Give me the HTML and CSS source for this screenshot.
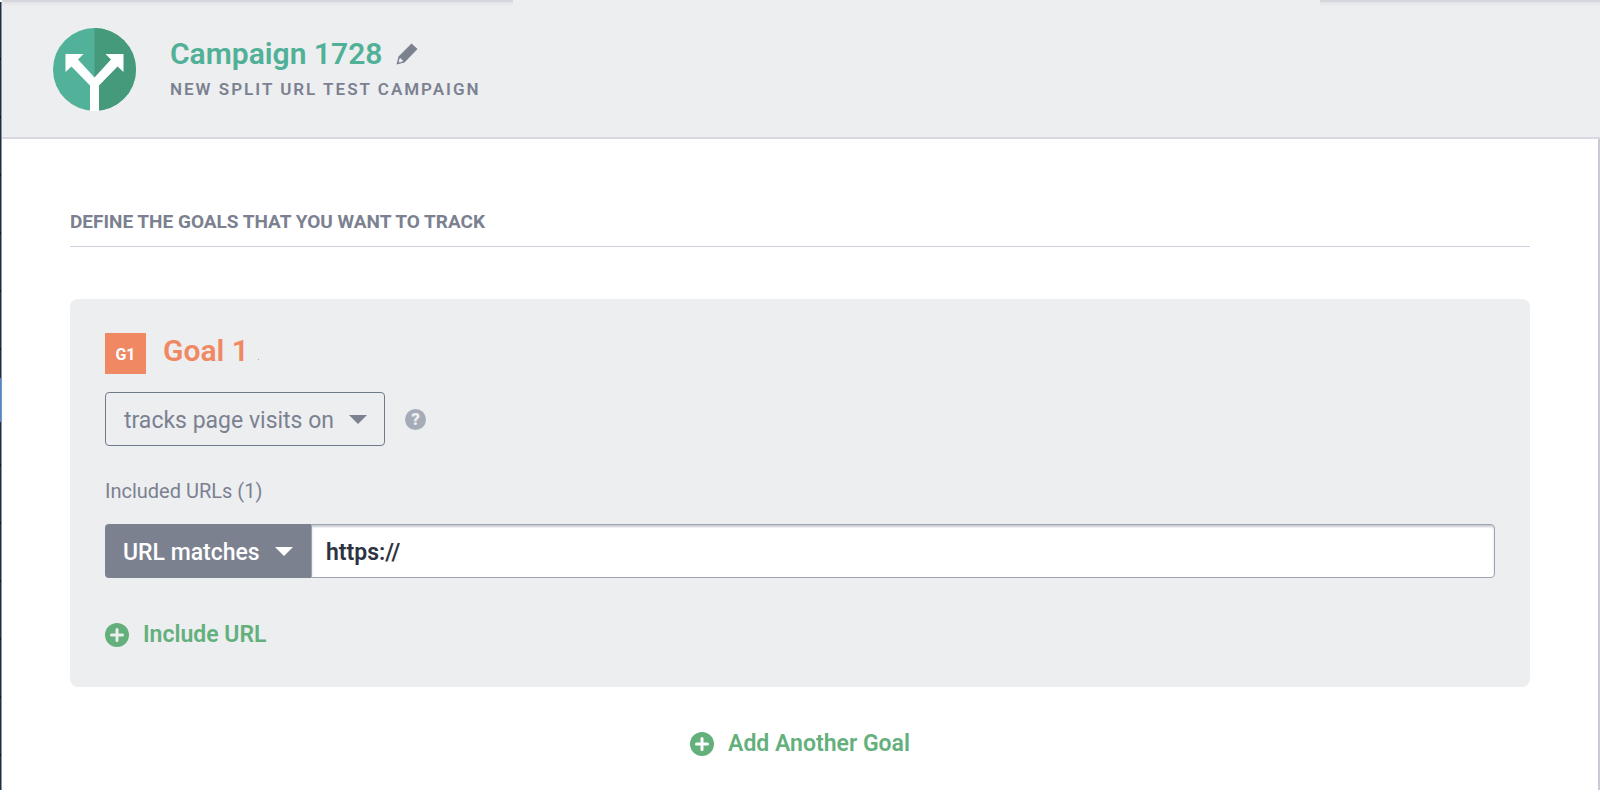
FILE: index.html
```html
<!DOCTYPE html>
<html lang="en">
    <head>
        <meta charset="UTF-8" />
        <meta name="viewport" content="width=device-width, initial-scale=1.0" />
        <title>Campaign 1728</title>
        <link rel="stylesheet" href="styles.css">
    </head>
    <body>
        <nav class="side-rail" aria-label="Main">
            <span class="side-rail-active"></span>
        </nav>
        <div class="page">
            <header class="campaign-header">
                <svg class="campaign-logo" viewBox="0 0 83 83" aria-hidden="true">
                    <circle cx="41.5" cy="41.5" r="41.5" fill="#52b199" />
                    <path d="M41.5 0a41.5 41.5 0 0 1 0 83z" fill="#449a7b" />
                    <path
                        d="M37 83V57.5L18.5 38.5L12.5 44V26H30.5L25 31.5L41.5 49.5L58 31.5L52.5 26H70.5V44L64.5 38.5L46 57.5V83z"
                        fill="#fff"
                    />
                </svg>
                <div class="campaign-info">
                    <div class="campaign-name">
                        <h1>Campaign 1728</h1>
                        <button class="icon-button" aria-label="Rename campaign">
                            <svg class="pencil" viewBox="0 0 22 22">
                                <path
                                    d="M15.5 0.5L21.5 6L8.5 19.5L0.5 21.5L2.5 13.5z"
                                    fill="#7b818f"
                                />
                                <path d="M3.6 15.5L5.2 15.3L5.6 16.8L7 17.2L6.6 18.6L3.6 19.6L2.6 18.6z" fill="#edeef0" />
                            </svg>
                        </button>
                    </div>
                    <p class="campaign-type">New split URL test campaign</p>
                </div>
            </header>

            <main class="content">
                <h2 class="section-title">Define the goals that you want to track</h2>

                <section class="goal-panel">
                    <div class="goal-header">
                        <span class="goal-badge">G1</span>
                        <h3>Goal 1</h3>
                        <span class="goal-edit-mark"></span>
                    </div>

                    <div class="goal-type">
                        <div class="dropdown dropdown-outline">
                            <select aria-label="Goal type">
                                <option>tracks page visits on</option>
                            </select>
                            <svg class="caret" viewBox="0 0 18 9">
                                <path d="M0 0H18L9 9z" fill="currentColor" />
                            </svg>
                        </div>
                        <button class="help" aria-label="Help">?</button>
                    </div>

                    <label class="url-label" for="url">Included URLs (1)</label>
                    <div class="url-row">
                        <div class="dropdown dropdown-solid">
                            <select aria-label="Match type">
                                <option>URL matches</option>
                            </select>
                            <svg class="caret" viewBox="0 0 18 9">
                                <path d="M0 0H18L9 9z" fill="currentColor" />
                            </svg>
                        </div>
                        <input type="text" id="url" class="url-input" value="https://" />
                    </div>

                    <button class="add-button">
                        <svg class="plus" viewBox="0 0 24 24">
                            <circle cx="12" cy="12" r="12" fill="#63b07c" />
                            <path d="M12 6.5V17.5M6.5 12H17.5" stroke="#edeef0" stroke-width="3" stroke-linecap="round" />
                        </svg>
                        Include URL
                    </button>
                </section>

                <div class="add-goal">
                    <button class="add-button">
                        <svg class="plus" viewBox="0 0 24 24">
                            <circle cx="12" cy="12" r="12" fill="#63b07c" />
                            <path d="M12 6.5V17.5M6.5 12H17.5" stroke="#fff" stroke-width="3" stroke-linecap="round" />
                        </svg>
                        Add Another Goal
                    </button>
                </div>
            </main>
        </div>
    </body>
</html>
```
FILE: styles.css
```css
* {
    margin: 0;
    padding: 0;
    box-sizing: border-box;
}

body {
    display: flex;
    min-height: 100vh;
    font-family: Roboto, "Liberation Sans", sans-serif;
    color: #7b8190;
    background-color: white;
}

button,
input,
select {
    font: inherit;
    color: inherit;
    border: 0;
    outline: none;
    background: none;
}

button,
select {
    cursor: pointer;
}

.side-rail {
    width: 2px;
    flex-shrink: 0;
    margin-top: 2px;
    padding-top: 376px;
    background: repeating-linear-gradient(#1d2f44 0, #1d2f44 56px, #0c141f 56px, #0c141f 58px);
    border-right: 1px solid #8d949d;
}

.side-rail-active {
    display: block;
    height: 44px;
    background-color: #3a8bf0;
}

.page {
    flex: 1;
    display: flex;
    flex-direction: column;
}

.campaign-header {
    position: relative;
    display: flex;
    align-items: flex-start;
    gap: 34px;
    padding: 28px 51px 26px;
    background-color: #edeef0;
    border-bottom: 2px solid #d8d8e2;
}

/* shadow of the bar above, open in the middle */
.campaign-header::before,
.campaign-header::after {
    content: "";
    position: absolute;
    top: 0;
    height: 6px;
    background: linear-gradient(#d6d6df 2px, #e2e2e7 2px, #edeef0);
}

.campaign-header::before {
    left: 0;
    width: 32%;
}

.campaign-header::after {
    right: 0;
    width: 280px;
}

.campaign-logo {
    width: 83px;
    height: 83px;
}

.campaign-info {
    padding-top: 8px;
}

.campaign-name {
    display: flex;
    align-items: center;
    gap: 14px;
}

.campaign-name h1 {
    font-size: 30px;
    line-height: 36px;
    font-weight: 600;
    color: #50b197;
}

.icon-button {
    display: flex;
}

.pencil {
    width: 22px;
    height: 22px;
}

.campaign-type {
    margin-top: 7px;
    font-size: 17px;
    line-height: 20px;
    font-weight: 600;
    letter-spacing: 2px;
    text-transform: uppercase;
}

.content {
    flex: 1;
    padding: 71px 68px 24px;
    border-right: 2px solid #c9ccd4;
}

.section-title {
    padding-bottom: 12px;
    font-size: 19px;
    line-height: 24px;
    font-weight: 700;
    text-transform: uppercase;
    border-bottom: 1px solid #d0d0de;
}

.goal-panel {
    margin-top: 52px;
    padding: 34px 35px 38px;
    background-color: #edeef0;
    border-radius: 8px;
}

.goal-header {
    display: flex;
    gap: 17px;
}

.goal-badge {
    width: 41px;
    line-height: 43px;
    height: 41px;
    text-align: center;
    font-size: 16px;
    font-weight: 700;
    color: white;
    background-color: #ef8863;
}

.goal-header h3 {
    font-size: 30px;
    line-height: 36px;
    font-weight: 600;
    color: #ef8863;
}

.goal-edit-mark {
    width: 1px;
    height: 1px;
    margin-top: 26px;
    margin-left: -8px;
    background-color: #a5abb6;
}

.goal-type {
    display: flex;
    align-items: center;
    gap: 20px;
    margin-top: 18px;
}

.dropdown {
    position: relative;
    height: 54px;
    font-size: 23px;
}

.dropdown select {
    appearance: none;
    width: 100%;
    height: 100%;
    padding: 2px 18px 0;
    border-radius: 4px;
}

.caret {
    position: absolute;
    top: 23px;
    right: 18px;
    width: 18px;
    height: 9px;
    pointer-events: none;
}

.dropdown-outline {
    width: 280px;
}

.dropdown-outline select {
    border: 1px solid #6f7a8b;
}

.dropdown-solid {
    width: 206px;
    font-weight: 500;
    color: white;
}

.dropdown-solid select {
    background-color: #7b818f;
    border-radius: 4px 0 0 4px;
}

.help {
    width: 21px;
    height: 21px;
    font-size: 17px;
    line-height: 21px;
    font-weight: 900;
    color: #edeef0;
    background-color: #a6acb7;
    border-radius: 50%;
}

.url-label {
    display: block;
    margin-top: 33px;
    font-size: 20px;
    line-height: 24px;
}

.url-row {
    display: flex;
    margin-top: 21px;
}

.url-input {
    flex: 1;
    padding: 2px 14px 0;
    font-size: 23px;
    font-weight: 600;
    color: #2d3340;
    background-color: white;
    border: 1px solid #9ca3b2;
    border-radius: 0 4px 4px 0;
    box-shadow: inset 0 2px 2px #c9cbd1;
}

.add-button {
    display: flex;
    align-items: center;
    gap: 14px;
    font-size: 23px;
    line-height: 28px;
    font-weight: 600;
    color: #63b07c;
}

.goal-panel .add-button {
    margin-top: 43px;
}

.plus {
    width: 24px;
    height: 24px;
}

.add-goal {
    display: flex;
    justify-content: center;
    margin-top: 43px;
}
```
